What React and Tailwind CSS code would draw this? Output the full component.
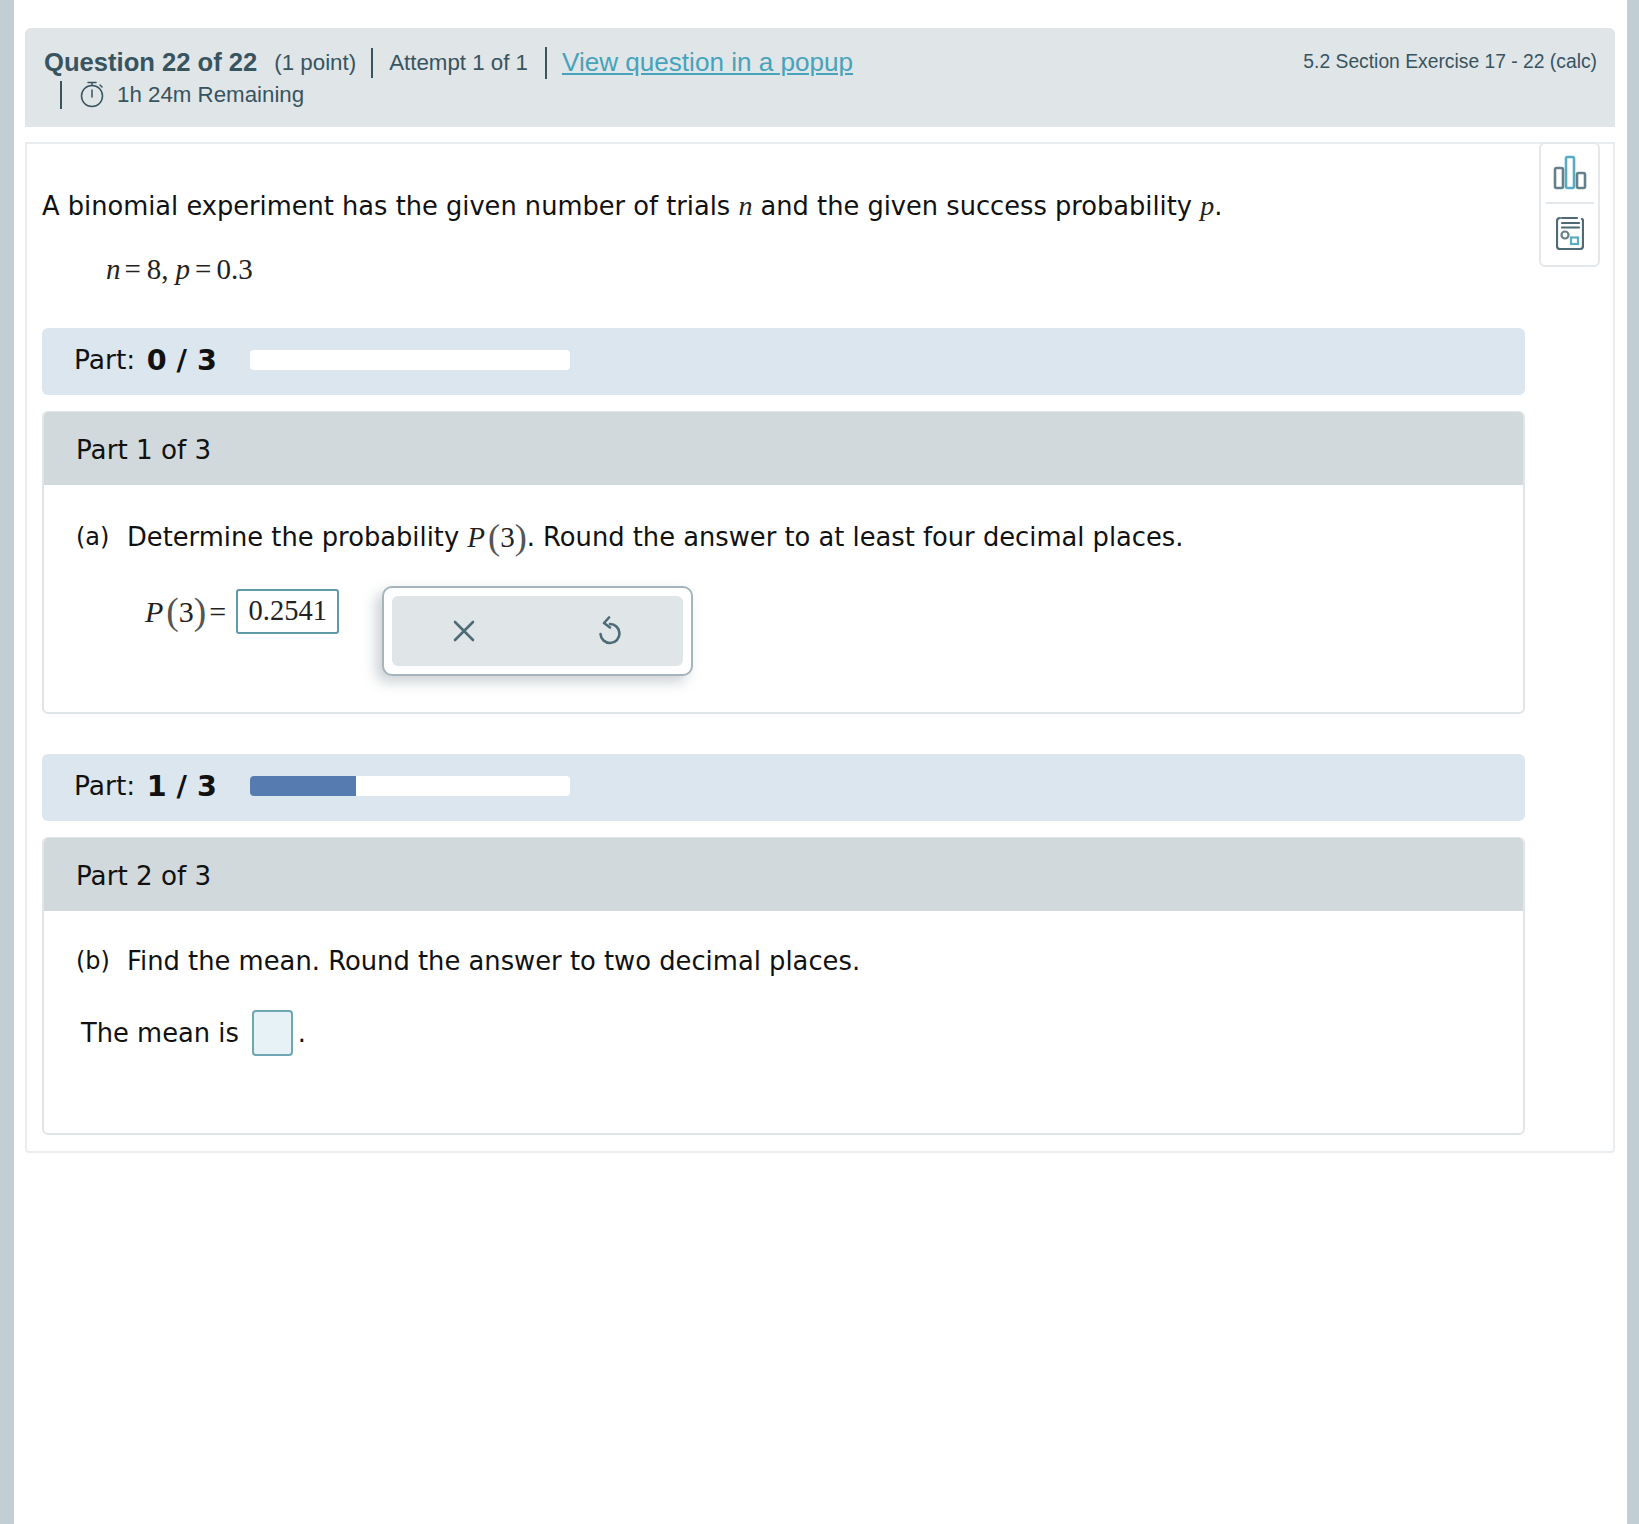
import React from 'react'

const sans = { fontFamily: '"DejaVu Sans", sans-serif' }

const Math1 = ({ children, className = '' }) => (
  <span className={`font-['Liberation_Serif',serif] text-[#222] ${className}`}>{children}</span>
)

// P(3) with the taller brackets the math renderer draws
const PofThree = ({ size }) => (
  <Math1 className={`inline-flex items-center ${size}`}>
    <i>P</i>
    <span className="ml-[3px] text-[1.25em] leading-[1] font-light text-[#555]">(</span>
    <span>3</span>
    <span className="text-[1.25em] leading-[1] font-light text-[#555]">)</span>
  </Math1>
)

const Divider = ({ className = '' }) => <span className={`inline-block w-[2px] bg-[#37545f] ${className}`} />

const ProgressBar = ({ label, fill }) => (
  <div className="flex items-center h-[67px] rounded-[6px] bg-[#dbe6ee] pl-[32px] pb-[3px]">
    <span className="flex items-center w-[176px] text-[26.5px] text-[#111] font-['DejaVu_Sans',sans-serif] whitespace-pre">
      Part: <b className="text-[28.6px] ml-[3px]">{label}</b>
    </span>
    <div className="w-[320px] h-[20px] rounded-[4px] bg-white overflow-hidden">
      {fill > 0 && <div className="h-full bg-[#567bb1]" style={{ width: `${fill}%` }} />}
    </div>
  </div>
)

const PartCard = ({ title, height, children }) => (
  <div className={`mt-[16px] rounded-[6px] border-2 border-[#e0e5e8] bg-white ${height}`}>
    <div className="flex items-center h-[73px] -mt-[1px] pt-[4px] bg-[#d2d9dc] rounded-t-[5px] pl-[32px] text-[26.2px] text-[#111] font-['DejaVu_Sans',sans-serif]">
      {title}
    </div>
    {children}
  </div>
)

export default function App() {
  return (
    <div className="flex min-h-[1524px] bg-white" style={sans}>
      <div className="w-[14px] bg-[#c1ced4]" />
      <div className="w-[1613px] pt-[28px] pl-[11px] pr-[12px]">
        {/* header */}
        <div className="flex justify-between h-[99px] rounded-t-[6px] bg-[#e0e5e8] pl-[19px] pr-[18px] pt-[17px] font-['Liberation_Sans',sans-serif] text-[#37545f]">
          <div>
            <div className="flex items-center h-[35px] text-[22.3px]">
              <b className="text-[25.6px]">Question 22 of 22</b>
              <span className="ml-[17px]">(1 point)</span>
              <Divider className="h-[30px] ml-[15px]" />
              <span className="ml-[16px]">Attempt 1 of 1</span>
              <Divider className="h-[32px] ml-[17px]" />
              <span className="ml-[15px] text-[26.1px] text-[#46a3bb] underline">View question in a popup</span>
            </div>
            <div className="flex items-center h-[30px] text-[22.3px]">
              <Divider className="h-[28px] ml-[16px]" />
              <svg className="ml-[18px] w-[24px] h-[30px]" viewBox="0 0 24 30" fill="none" stroke="#37545f" strokeWidth="1.5">
                <circle cx="12" cy="16" r="10.5" />
                <path d="M8 2.5h8M12 2.5v3M12 10v7M20 5l2 2" strokeLinecap="round" />
              </svg>
              <span className="ml-[13px]">1h 24m Remaining</span>
            </div>
          </div>
          <div className="text-[19.3px] pt-[3px]">5.2 Section Exercise 17 - 22 (calc)</div>
        </div>

        {/* question panel */}
        <div className="flex mt-[15px] h-[1011px] rounded-b-[4px] border-2 border-[#e9edf0] pl-[15px]">
          <div className="w-[1483px]">
            <p className="mt-[44px] text-[25.7px] leading-[36px] text-[#111] whitespace-nowrap">
              A binomial experiment has the given number of trials <Math1 className="italic text-[28px]">n</Math1> and the given success probability <Math1 className="italic text-[28px]">p</Math1>.
            </p>
            <div className="mt-[27px] ml-[64px] h-[36px] text-[29px] leading-[36px]">
              <Math1>
                <i>n</i><span className="ml-[4px] mr-[6px]">=</span>8,<i className="ml-[7px]">p</i><span className="mx-[5px]">=</span>0.3
              </Math1>
            </div>

            <div className="mt-[41px]">
              <ProgressBar label="0 / 3" fill={0} />
            </div>
            <PartCard title="Part 1 of 3" height="h-[303px]">
              <div className="flex items-center mt-[34px] ml-[32px] text-[25.75px] leading-[36px] text-[#111] whitespace-nowrap">
                <span className="w-[51px] text-[24px]">(a)</span>
                <span className="flex items-center whitespace-pre">
                  Determine the probability <PofThree size="text-[29px]" />. Round the answer to at least four decimal places.
                </span>
              </div>
              <div className="flex items-start mt-[34px] ml-[101px]">
                <div className="flex items-center h-[45px]">
                  <PofThree size="text-[30px]" />
                  <Math1 className="text-[30px] ml-[3px]">=</Math1>
                  <span className="flex items-center justify-center ml-[10px] w-[103px] h-[45px] rounded-[3px] border-2 border-[#5f9aa8] bg-white">
                    <Math1 className="text-[28.5px]">0.2541</Math1>
                  </span>
                </div>
                <div className="ml-[43px] -mt-[3px] w-[311px] h-[90px] rounded-[10px] border-2 border-[#a5b5bb] bg-white p-[8px] shadow-[-6px_6px_14px_rgba(70,90,100,0.28)]">
                  <div className="flex items-center h-full rounded-[6px] bg-[#e0e5e8] text-[#4d6b77]">
                    <svg className="ml-[61px] w-[22px] h-[22px]" viewBox="0 0 22 22" fill="none" stroke="currentColor" strokeWidth="2.6" strokeLinecap="round">
                      <path d="M2 2l18 18M20 2L2 20" />
                    </svg>
                    <svg className="ml-[123px] w-[24px] h-[30px]" viewBox="0 0 24 30" fill="none" stroke="currentColor" strokeWidth="2.6" strokeLinecap="round" strokeLinejoin="round">
                      <path d="M12 8a9.5 9.5 0 1 1-9.5 10" />
                      <path d="M11 1.5L6 7l6 4.5" />
                    </svg>
                  </div>
                </div>
              </div>
            </PartCard>

            <div className="mt-[40px]">
              <ProgressBar label="1 / 3" fill={33} />
            </div>
            <PartCard title="Part 2 of 3" height="h-[298px]">
              <div className="flex items-center mt-[32px] ml-[32px] text-[25.8px] leading-[36px] text-[#111] whitespace-nowrap">
                <span className="w-[51px] text-[24px]">(b)</span>
                <span>Find the mean. Round the answer to two decimal places.</span>
              </div>
              <div className="flex items-center mt-[31px] ml-[37px] text-[25.75px] text-[#111]">
                <span>The mean is</span>
                <span className="ml-[13px] w-[41px] h-[46px] rounded-[4px] border-2 border-[#6ea6b3] bg-[#e6f2f6]" />
                <span className="ml-[5px]">.</span>
              </div>
            </PartCard>
          </div>

          {/* tools */}
          <div className="ml-[14px] -mt-[2px] w-[61px] h-[125px] rounded-[6px] border-2 border-[#e4e8eb] bg-white flex flex-col items-center">
            <svg className="mt-[11px] w-[36px] h-[36px]" viewBox="0 0 36 36" fill="none" strokeWidth="2.6">
              <rect x="3" y="13" width="8" height="20" rx="1.5" stroke="#64808b" />
              <rect x="14" y="2" width="8" height="31" rx="1.5" stroke="#57adc4" />
              <rect x="25" y="18" width="8" height="15" rx="1.5" stroke="#64808b" />
            </svg>
            <div className="mt-[11px] w-[48px] h-[2px] bg-[#e4e8eb]" />
            <svg className="mt-[12px] w-[28px] h-[34px]" viewBox="0 0 28 34" fill="none" strokeWidth="2.2">
              <path d="M26 3a2 2 0 0 1 1 2v25a3 3 0 0 1-3 3H4a3 3 0 0 1-3-3V5a3 3 0 0 1 3-3" stroke="#4d6b77" strokeLinecap="round" />
              <path d="M6 2h15M6 7h17M6 11.5h17" stroke="#4d6b77" strokeLinecap="round" />
              <circle cx="9" cy="19" r="3.5" stroke="#64808b" />
              <rect x="15" y="21.5" width="7" height="6.5" stroke="#57adc4" />
            </svg>
          </div>
        </div>
      </div>
      <div className="w-[12px] bg-[#c1ced4]" />
    </div>
  )
}
